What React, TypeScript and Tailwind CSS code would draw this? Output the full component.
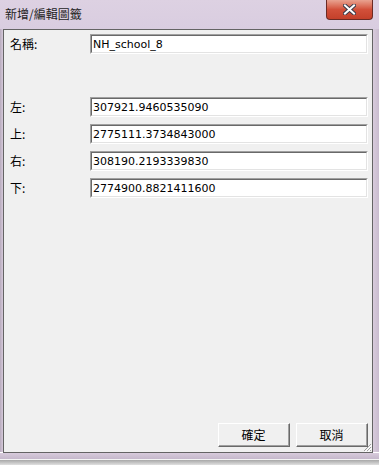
import React from "react";

const Field = ({ value }: { value: string }) => (
  <div className="flex-1 h-[20px] border-t border-l border-[#a0a0a0] border-b border-r border-b-white border-r-white">
    <div className="h-full border-t border-l border-[#696969] border-b border-r border-b-[#e3e3e3] border-r-[#e3e3e3] bg-white flex items-center pl-[1px]">
      <span className="text-[11px] leading-none text-black" style={{ fontFamily: '"DejaVu Sans", sans-serif' }}>{value}</span>
    </div>
  </div>
);

const Row = ({ label, value }: { label: string; value: string }) => (
  <div className="flex items-center h-[20px]">
    <div className="w-[80px] text-[12px] leading-none text-black" style={{ fontFamily: '"Noto Sans CJK TC", sans-serif' }}>{label}</div>
    <Field value={value} />
  </div>
);

const Btn = ({ label }: { label: string }) => (
  <div className="w-[72px] h-[24px] border-t border-l border-white border-b border-r border-b-[#696969] border-r-[#696969]">
    <div className="h-full border-b border-r border-[#a0a0a0] border-t-0 border-l-0 bg-[#f0f0f0] flex items-center justify-center">
      <span className="text-[12px] leading-none text-black" style={{ fontFamily: '"Noto Sans CJK TC", sans-serif' }}>{label}</span>
    </div>
  </div>
);

export default function App() {
  return (
    <div className="w-[379px] h-[465px] bg-white overflow-hidden flex flex-col">
      {/* Title bar */}
      <div className="relative h-[29px] bg-gradient-to-b from-[#ddd1e2] to-[#d9cde0] flex items-center pl-[5px] pb-[1px]">
        <span className="text-[12px] leading-none text-[#1e1e1e]" style={{ fontFamily: '"Noto Sans CJK TC", sans-serif' }}>新增/編輯圖籤</span>
        <div className="absolute left-[326px] top-0 w-[47px] h-[20px] rounded-b-[4px] border border-t-0 border-[#6b2b24] bg-gradient-to-b from-[#e8a290] via-[#d2503a] to-[#c4402a] flex items-center justify-center">
          <svg width="13" height="11" viewBox="0 0 13 11">
            <path d="M2 1.5 L11 9.5 M11 1.5 L2 9.5" stroke="#3b3b4a" strokeWidth="4" strokeLinecap="square" />
            <path d="M2 1.5 L11 9.5 M11 1.5 L2 9.5" stroke="#ffffff" strokeWidth="2" strokeLinecap="square" />
          </svg>
        </div>
      </div>
      <div className="flex h-[423px]">
        <div className="w-[3px] bg-gradient-to-r from-[#b8abbd] to-[#d6cadb]" />
        <div className="relative flex-1 bg-[#f0f0f0] border-t border-l border-[#646464] flex flex-col pt-[4px] pl-[6px] pr-[4px] pb-[5px]">
          <Row label="名稱:" value="NH_school_8" />
          <div className="mt-[43px] flex flex-col gap-[7px]">
            <Row label="左:" value="307921.9460535090" />
            <Row label="上:" value="2775111.3734843000" />
            <Row label="右:" value="308190.2193339830" />
            <Row label="下:" value="2774900.8821411600" />
          </div>
          <div className="mt-auto flex justify-end gap-[6px]">
            <Btn label="確定" />
            <Btn label="取消" />
          </div>
          <svg className="absolute right-0 bottom-0" width="10" height="10" viewBox="0 0 10 10">
            <path d="M9 2 L2 9 M9 5 L5 9 M9 8 L8 9" stroke="#a0a0a0" strokeWidth="1" />
            <path d="M10 3 L3 10 M10 6 L6 10" stroke="#ffffff" strokeWidth="1" />
          </svg>
        </div>
        <div className="w-[1px] bg-[#646464]" />
        <div className="w-[6px] bg-gradient-to-r from-[#d8cbdc] to-[#c9bccf]" />
      </div>
      <div className="h-[1px] ml-[3px] mr-[6px] bg-[#646464]" />
      <div className="h-[6px] bg-gradient-to-b from-[#d8cbdc] to-[#c5b8cb]" />
      <div className="h-[1px] bg-[#f4f4f4]" />
      <div className="flex-1 bg-gradient-to-b from-[#a8a8a8] to-[#e0e0e0]" />
    </div>
  );
}
